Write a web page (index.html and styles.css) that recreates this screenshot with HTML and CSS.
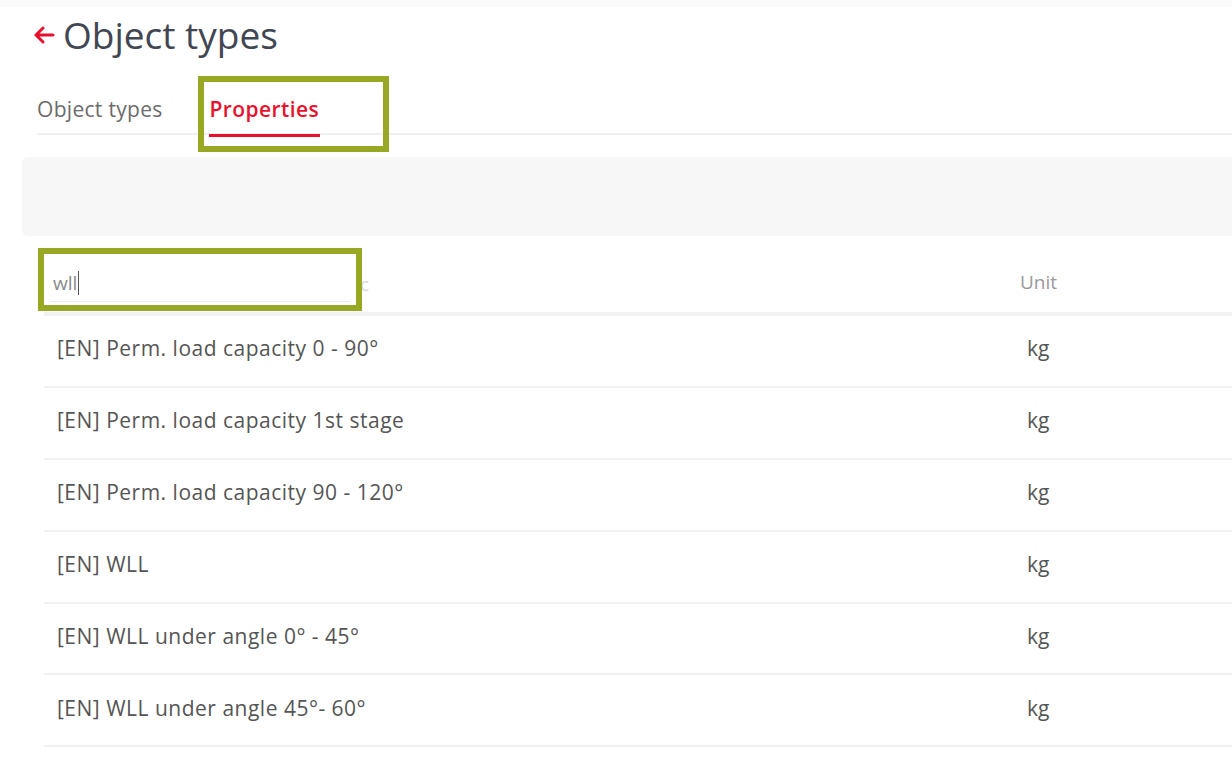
FILE: index.html
```html
<!DOCTYPE html>
<html lang="en">
<head>
    <meta charset="UTF-8">
    <meta name="viewport" content="width=device-width, initial-scale=1.0">
    <title>Object types - Properties</title>
    <link rel="stylesheet" href="styles.css">
</head>
<body>
    <div class="top-strip"></div>

    <div class="page">
        <header class="page-header">
            <a class="back-link" href="#">
                <svg width="22" height="18" viewBox="0 0 22 18">
                    <path d="M20 9 H3 M10 2 L3 9 L10 16" fill="none" stroke="#e8112d" stroke-width="3" stroke-linecap="round" stroke-linejoin="round"/>
                </svg>
            </a>
            <h1 class="title">Object types</h1>
        </header>

        <nav class="tabs">
            <a class="tab" href="#">Object types</a>
            <a class="tab active" href="#">
                Properties
                <span class="mark mark-tab"></span>
            </a>
        </nav>

        <div class="filter-panel"></div>

        <div class="table">
            <div class="table-head">
                <div class="search-cell">
                    <div class="search">wll<span class="caret"></span></div>
                    <span class="hidden-col">c</span>
                    <span class="mark mark-search"></span>
                </div>
                <div class="head-unit">Unit</div>
            </div>

            <div class="row">
                <div class="cell-name">[EN] Perm. load capacity 0 - 90°</div>
                <div class="cell-unit">kg</div>
            </div>
            <div class="row">
                <div class="cell-name">[EN] Perm. load capacity 1st stage</div>
                <div class="cell-unit">kg</div>
            </div>
            <div class="row">
                <div class="cell-name">[EN] Perm. load capacity 90 - 120°</div>
                <div class="cell-unit">kg</div>
            </div>
            <div class="row">
                <div class="cell-name">[EN] WLL</div>
                <div class="cell-unit">kg</div>
            </div>
            <div class="row">
                <div class="cell-name">[EN] WLL under angle 0° - 45°</div>
                <div class="cell-unit">kg</div>
            </div>
            <div class="row">
                <div class="cell-name">[EN] WLL under angle 45°- 60°</div>
                <div class="cell-unit">kg</div>
            </div>
        </div>
    </div>
</body>
</html>
```

FILE: styles.css
```css
* {
    margin: 0;
    padding: 0;
    box-sizing: border-box;
}

body {
    background: #fff;
    font-family: 'Open Sans', 'Lato', sans-serif;
    color: #4a4a4a;
    overflow: hidden;
}

.top-strip {
    height: 7px;
    background: #fafafa;
}

.page {
    padding-left: 22px;
}

/* Header */
.page-header {
    display: flex;
    align-items: center;
    height: 54px;
    padding-left: 11px;
}

.back-link {
    display: flex;
    margin-right: 8px;
    margin-top: 2px;
}

.title {
    font-size: 37px;
    font-weight: 400;
    color: #414652;
}

/* Tabs */
.tabs {
    display: flex;
    margin-left: 15px;
    margin-top: 17px;
    border-bottom: 2px solid #f0f0f0;
    height: 57px;
}

.tab {
    position: relative;
    display: block;
    font-size: 21px;
    letter-spacing: 0.3px;
    color: #6b6b6b;
    text-decoration: none;
    padding-top: 17px;
    margin-right: 46px;
}

.tab.active {
    color: #e8112d;
    font-weight: 600;
    letter-spacing: 0.4px;
    padding-left: 1px;
    padding-right: 1px;
    border-bottom: 3px solid #e8112d;
    height: 59px;
}

/* annotation boxes */
.mark {
    position: absolute;
    border: 6px solid #98a824;
    pointer-events: none;
}

.mark-tab {
    left: -11px;
    right: -69px;
    top: -2px;
    height: 76px;
}

/* Filter panel */
.filter-panel {
    margin-top: 22px;
    height: 79px;
    background: #f7f7f7;
    border-radius: 6px 0 0 6px;
}

/* Table */
.table {
    margin-left: 22px;
    margin-top: 11px;
}

.table-head {
    display: flex;
    align-items: center;
    height: 69px;
    padding-top: 4px;
    border-bottom: 4px solid #f2f2f2;
}

.search-cell {
    position: relative;
    width: 976px;
    height: 100%;
    padding: 18px 0 0 6px;
}

.search {
    width: 300px;
    height: 33px;
    border-bottom: 1px solid #ececec;
    font-size: 19px;
    color: #8a8a8a;
    padding: 1px 3px 0 3px;
}

.caret {
    display: inline-block;
    width: 1px;
    height: 24px;
    background: #555;
    vertical-align: -5px;
    margin-left: 1px;
}

.hidden-col {
    position: absolute;
    left: 316px;
    top: 20px;
    font-size: 19px;
    color: #d8d8d8;
}

.mark-search {
    left: -6px;
    top: -3px;
    width: 324px;
    height: 63px;
}

.head-unit {
    font-size: 19px;
    color: #999;
}

.row {
    display: flex;
    align-items: center;
    height: 71.9px;
    padding-bottom: 5px;
    border-bottom: 2px solid #f1f1f1;
}

.cell-name {
    width: 983px;
    padding-left: 13px;
    font-size: 21px;
    letter-spacing: 0.5px;
    color: #555;
}

.cell-unit {
    font-size: 21px;
    color: #555;
}
```
